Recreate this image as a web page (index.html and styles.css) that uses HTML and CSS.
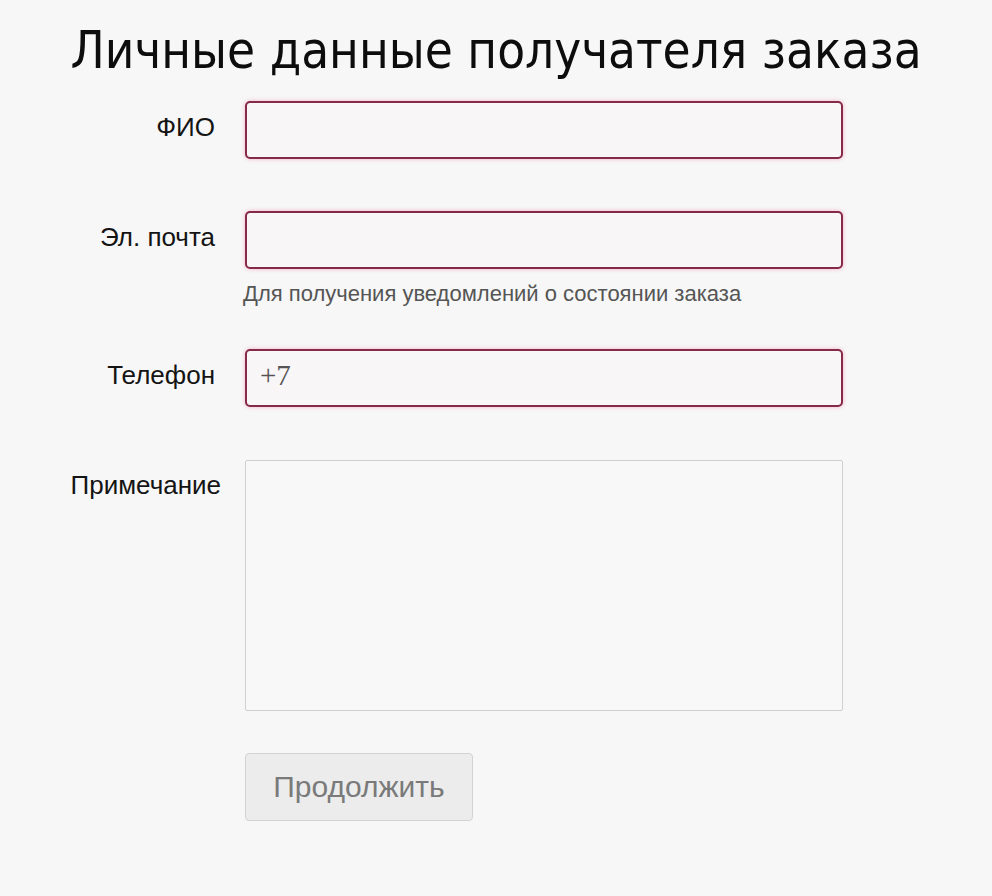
FILE: index.html
```html
<!DOCTYPE html>
<html lang="ru">
<head>
<meta charset="utf-8">
<title>Личные данные получателя заказа</title>
<link rel="stylesheet" href="styles.css">
</head>
<body>
<div class="page">
  <h1 class="title">Личные данные получателя заказа</h1>
  <form class="form">
    <div class="row row-fio">
      <label class="label">ФИО</label>
      <div class="field"><input class="input input-error" type="text"></div>
    </div>
    <div class="row row-email">
      <label class="label">Эл. почта</label>
      <div class="field">
        <input class="input input-error" type="text">
        <div class="hint">Для получения уведомлений о состоянии заказа</div>
      </div>
    </div>
    <div class="row row-phone">
      <label class="label">Телефон</label>
      <div class="field"><input class="input input-error input-phone" type="text" placeholder="+7"></div>
    </div>
    <div class="row row-note">
      <label class="label label-note">Примечание</label>
      <div class="field"><textarea class="textarea"></textarea></div>
    </div>
    <div class="row row-btn">
      <span class="label"></span>
      <div class="field"><button class="btn" type="button" disabled>Продолжить</button></div>
    </div>
  </form>
</div>
</body>
</html>
```
FILE: styles.css
```css
html, body {
  margin: 0;
  padding: 0;
  background: #f7f7f7;
}
body {
  font-family: "Liberation Sans", Arial, sans-serif;
  color: #222;
}
.page {
  width: 992px;
  height: 896px;
  box-sizing: border-box;
  padding-top: 23px;
}
.title {
  margin: 0;
  font-family: "DejaVu Sans Condensed", "DejaVu Sans", sans-serif;
  font-weight: normal;
  font-size: 50.7px;
  line-height: 56px;
  color: #0d0d0d;
  text-align: center;
  letter-spacing: 0;
}
.form {
  margin-top: 22px;
}
.row {
  display: grid;
  grid-template-columns: 215px 598px;
  column-gap: 30px;
}
.label {
  text-align: right;
  font-size: 26px;
  line-height: 28px;
  color: #141414;
  padding-top: 12px;
  white-space: nowrap;
}
.label-note {
  margin-right: -6px;
  padding-top: 11px;
}
.input {
  display: block;
  box-sizing: border-box;
  width: 598px;
  height: 58px;
  margin: 0;
  background: #f9f6f7;
  border: 2px solid #852a48;
  border-radius: 5px;
  box-shadow: 0 0 4px rgba(240, 130, 165, 0.6);
  font-family: "Liberation Sans", Arial, sans-serif;
  font-size: 22px;
  padding: 0 13px;
  outline: none;
}
.input::placeholder {
  color: #555;
  font-family: "Liberation Serif", serif;
  font-size: 29px;
}
.row-email { margin-top: 52px; }
.row-phone { margin-top: 44px; }
.row-note { margin-top: 53px; }
.row-btn { margin-top: 42px; }
.hint {
  margin-top: 14px;
  margin-left: -2px;
  font-size: 22px;
  line-height: 22px;
  color: #555;
}
.textarea {
  display: block;
  box-sizing: border-box;
  width: 598px;
  height: 251px;
  margin: 0;
  background: #f8f8f8;
  border: 1px solid #cfcfcf;
  border-radius: 2px;
  resize: none;
  outline: none;
}
.btn {
  box-sizing: border-box;
  width: 228px;
  height: 68px;
  background: #ececec;
  border: 1px solid #d3d3d3;
  border-radius: 4px;
  font-family: "Liberation Sans", Arial, sans-serif;
  font-size: 30px;
  color: #7a7a7a;
  padding: 0;
}
```
